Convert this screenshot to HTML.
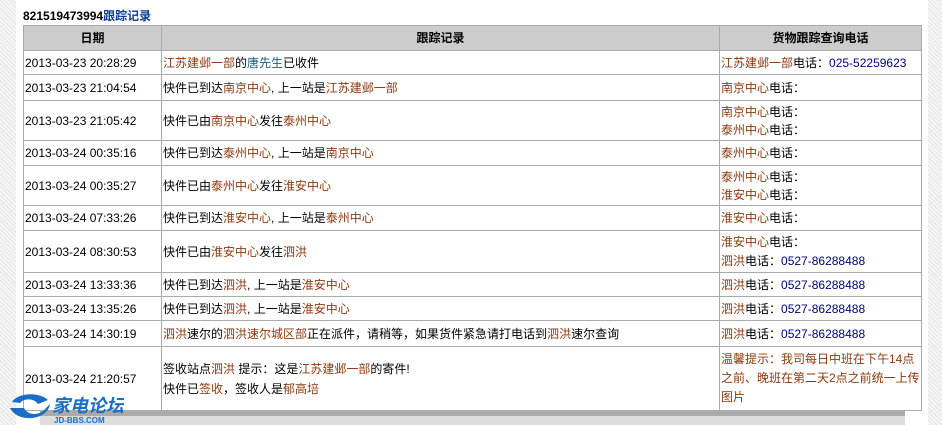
<!DOCTYPE html>
<html><head><meta charset="utf-8"><style>
body{margin:0;width:942px;height:425px;overflow:hidden;background:#fff;position:relative;font-family:"Liberation Sans","Noto Sans CJK SC",sans-serif;font-size:12px;color:#000}
.hl{position:absolute;left:0;top:0;width:16px;height:425px;background:repeating-linear-gradient(45deg,#e4e4e4 0 1px,#f6f6f6 1px 3px)}
.hr{position:absolute;right:0;top:0;width:14px;height:425px;background:repeating-linear-gradient(45deg,#e4e4e4 0 1px,#f6f6f6 1px 3px)}
.t{position:absolute;left:23px;top:7px;font-weight:bold;font-size:12px}
.t span{color:#0b3d91}
table{position:absolute;left:23px;top:25px;width:899px;border-collapse:collapse}
td,th{border:1px solid #aaa;padding:0 1px;vertical-align:middle;line-height:16px;white-space:nowrap}
th{background:#ccc;height:24px;font-size:12px}
.b{color:#8b3a0f}.n{color:#00007a}.u{color:#1a5a8a}
.bar{position:absolute;left:40px;top:411px;width:865px;height:14px;background:linear-gradient(#aaa 0 5px,#ddd 5px)}
</style></head><body>
<div class="hl"></div><div class="hr"></div>
<div class="t">821519473994<span>跟踪记录</span></div>
<table>
<tr style="height:25px"><th style="width:135px">日期</th><th style="width:555px">跟踪记录</th><th>货物跟踪查询电话</th></tr>
<tr style="height:24px"><td>2013-03-23 20:28:29</td><td><span class="b">江苏建邺一部</span>的<span class="u">唐先生</span>已收件</td><td><span class="b">江苏建邺一部</span>电话：<span class="n">025-52259623</span></td></tr>
<tr style="height:26px"><td>2013-03-23 21:04:54</td><td>快件已到达<span class="b">南京中心</span>, 上一站是<span class="b">江苏建邺一部</span></td><td><span class="b">南京中心</span>电话：</td></tr>
<tr style="height:40px"><td>2013-03-23 21:05:42</td><td>快件已由<span class="b">南京中心</span>发往<span class="b">泰州中心</span></td><td style="line-height:18px"><span class="b">南京中心</span>电话：<br><span class="b">泰州中心</span>电话：</td></tr>
<tr style="height:25px"><td>2013-03-24 00:35:16</td><td>快件已到达<span class="b">泰州中心</span>, 上一站是<span class="b">南京中心</span></td><td><span class="b">泰州中心</span>电话：</td></tr>
<tr style="height:40px"><td>2013-03-24 00:35:27</td><td>快件已由<span class="b">泰州中心</span>发往<span class="b">淮安中心</span></td><td style="line-height:18px"><span class="b">泰州中心</span>电话：<br><span class="b">淮安中心</span>电话：</td></tr>
<tr style="height:25px"><td>2013-03-24 07:33:26</td><td>快件已到达<span class="b">淮安中心</span>, 上一站是<span class="b">泰州中心</span></td><td><span class="b">淮安中心</span>电话：</td></tr>
<tr style="height:42px"><td>2013-03-24 08:30:53</td><td>快件已由<span class="b">淮安中心</span>发往<span class="b">泗洪</span></td><td style="line-height:19px"><span class="b">淮安中心</span>电话：<br><span class="b">泗洪</span>电话：<span class="n">0527-86288488</span></td></tr>
<tr style="height:24px"><td>2013-03-24 13:33:36</td><td>快件已到达<span class="b">泗洪</span>, 上一站是<span class="b">淮安中心</span></td><td><span class="b">泗洪</span>电话：<span class="n">0527-86288488</span></td></tr>
<tr style="height:24px"><td>2013-03-24 13:35:26</td><td>快件已到达<span class="b">泗洪</span>, 上一站是<span class="b">淮安中心</span></td><td><span class="b">泗洪</span>电话：<span class="n">0527-86288488</span></td></tr>
<tr style="height:26px"><td>2013-03-24 14:30:19</td><td><span class="b">泗洪</span>速尔的<span class="b">泗洪速尔城区部</span>正在派件，请稍等，如果货件紧急请打电话到<span class="b">泗洪</span>速尔查询</td><td><span class="b">泗洪</span>电话：<span class="n">0527-86288488</span></td></tr>
<tr style="height:64px"><td>2013-03-24 21:20:57</td><td style="line-height:20px">签收站点<span class="b">泗洪</span> 提示：这是<span class="b">江苏建邺一部</span>的寄件!<br>快件已<span class="b">签收</span>，签收人是<span class="b">郁高培</span></td><td class="b" style="line-height:19px;white-space:normal">温馨提示：我司每日中班在下午14点之前、晚班在第二天2点之前统一上传图片</td></tr>
</table>
<div class="bar"></div>
<svg style="position:absolute;left:4px;top:388px" width="120" height="37">
<path d="M8 14 C14 4,36 4,44 12 L34 16 C30 10,20 10,16 15 Z M6 20 L20 20 C24 28,36 28,42 20 L46 16 C44 32,14 36,6 20Z" fill="#1a6fc4"/>
<text x="48" y="24" font-size="18" font-weight="bold" fill="#1a6fc4" font-family="Noto Sans CJK SC,sans-serif" font-style="italic">家电论坛</text>
<text x="50" y="35" font-size="8" font-weight="bold" fill="#1a6fc4" font-family="Liberation Sans,sans-serif">JD-BBS.COM</text>
</svg>
</body></html>
